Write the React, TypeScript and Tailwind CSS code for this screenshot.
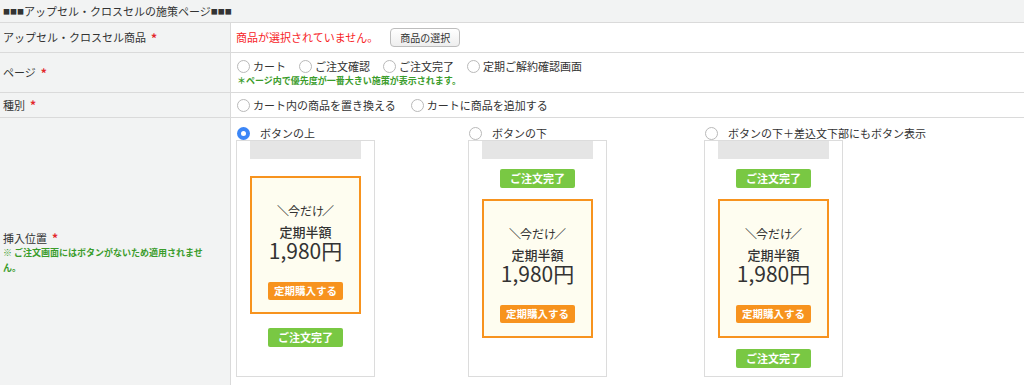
import React from "react";

const FONT = { fontFamily: '"Noto Sans CJK JP", "Noto Sans", sans-serif' };

function Radio({ checked = false }: { checked?: boolean }) {
  if (checked) {
    return (
      <span className="flex h-[13px] w-[13px] shrink-0 items-center justify-center rounded-full bg-[#3b86f7]">
        <span className="h-[5px] w-[5px] rounded-full bg-white" />
      </span>
    );
  }
  return <span className="block h-[13px] w-[13px] shrink-0 rounded-full border border-[#b9b9b9] bg-white" />;
}

function Req() {
  return <span className="ml-[5px] text-[12px] font-bold text-[#e3262b]">*</span>;
}

function GreenBtn() {
  return (
    <div className="flex h-[19px] w-[75px] items-center justify-center rounded-[2px] bg-[#79c843] text-[11px] font-bold leading-none text-white">
      ご注文完了
    </div>
  );
}

function Offer({ h }: { h: string }) {
  return (
    <div className={`flex w-[111px] flex-col items-center border-2 border-[#f7931e] bg-[#fefdf0] pt-[25px] text-[#333] ${h}`}>
      <div className="flex h-[16px] items-center text-[12px] leading-[16px]">
        <span className="tracking-[-3px]">＼</span>
        <span className="ml-[2px]">今だけ</span>
        <span className="ml-[-2px]">／</span>
      </div>
      <div className="mt-[4px] text-[13px] font-medium leading-[17px]">定期半額</div>
      <div className="text-[21px] leading-[21px]">1,980円</div>
      <div className="mt-[21px] flex h-[18px] w-[75px] items-center justify-center rounded-[2px] bg-[#f7931e] text-[10.5px] font-bold leading-none text-white">
        定期購入する
      </div>
    </div>
  );
}

function Card({ children }: { children: React.ReactNode }) {
  return (
    <div className="flex h-[237px] w-[139px] flex-col items-center border border-[#dcdcdc] bg-white">
      <div className="h-[18px] w-[111px] bg-[#e5e5e5]" />
      {children}
    </div>
  );
}

export default function App() {
  return (
    <div className="w-[1024px] bg-white text-[#333]" style={FONT}>
      <div className="flex h-[23px] items-center border-b border-[#dadada] bg-[#f2f3f3] pl-[3px] text-[11px]">
        <span className="text-[7px]">■■■</span>
        <span>アップセル・クロスセルの施策ページ</span>
        <span className="text-[7px]">■■■</span>
      </div>

      {/* row 1 */}
      <div className="flex h-[30px] border-b border-[#dadada]">
        <div className="flex w-[231px] shrink-0 items-center border-r border-[#dadada] bg-[#f2f3f3] pl-[3px] text-[11px]">
          アップセル・クロスセル商品<Req />
        </div>
        <div className="flex flex-1 items-center pl-[5px]">
          <span className="text-[11px] text-[#f7231f]">商品が選択されていません。</span>
          <button className="ml-[12px] flex h-[19px] w-[70px] items-center justify-center rounded-[4px] border border-[#bdbdbd] bg-gradient-to-b from-white to-[#eeeeee] text-[10px] text-[#333]">
            商品の選択
          </button>
        </div>
      </div>

      {/* row 2 */}
      <div className="flex h-[40px] border-b border-[#dadada]">
        <div className="flex w-[231px] shrink-0 items-center border-r border-[#dadada] bg-[#f2f3f3] pl-[3px] text-[11px]">
          ページ<Req />
        </div>
        <div className="flex flex-1 flex-col justify-center pl-[6px]">
          <div className="flex h-[16px] items-center gap-[13px] text-[11px]">
            {["カート", "ご注文確認", "ご注文完了", "定期ご解約確認画面"].map((t) => (
              <label key={t} className="flex items-center gap-[3px]">
                <Radio />
                <span>{t}</span>
              </label>
            ))}
          </div>
          <div className="h-[12px] text-[9px] font-bold leading-[12px] text-[#3a9c2b]">
            ＊ページ内で優先度が一番大きい施策が表示されます。
          </div>
        </div>
      </div>

      {/* row 3 */}
      <div className="flex h-[25px] border-b border-[#dadada]">
        <div className="flex w-[231px] shrink-0 items-center border-r border-[#dadada] bg-[#f2f3f3] pl-[3px] text-[11px]">
          種別<Req />
        </div>
        <div className="flex flex-1 items-center gap-[15px] pl-[6px] text-[11px]">
          {["カート内の商品を置き換える", "カートに商品を追加する"].map((t) => (
            <label key={t} className="flex items-center gap-[3px]">
              <Radio />
              <span>{t}</span>
            </label>
          ))}
        </div>
      </div>

      {/* row 4 */}
      <div className="flex h-[270px]">
        <div className="flex w-[231px] shrink-0 flex-col justify-center border-r border-[#dadada] bg-[#f2f3f3] pl-[3px]">
          <div className="text-[11px] leading-[14px]">
            挿入位置<Req />
          </div>
          <div className="w-[212px] text-[9px] font-bold leading-[15px] text-[#3a9c2b]">
            ※ ご注文画面にはボタンがないため適用されませ<br />ん。
          </div>
        </div>
        <div className="flex flex-1 pl-[5px] pt-[8px] text-[11px]">
          <div className="flex w-[232px] flex-col">
            <div className="flex h-[14px] items-center gap-[10px] pl-[1px]">
              <Radio checked />
              <span>ボタンの上</span>
            </div>
            <Card>
              <div className="mt-[17px]">
                <Offer h="h-[138px]" />
              </div>
              <div className="mt-[14px]">
                <GreenBtn />
              </div>
            </Card>
          </div>
          <div className="flex w-[236px] flex-col">
            <div className="flex h-[14px] items-center gap-[10px] pl-[1px]">
              <Radio />
              <span>ボタンの下</span>
            </div>
            <Card>
              <div className="mt-[10px]">
                <GreenBtn />
              </div>
              <div className="mt-[11px]">
                <Offer h="h-[139px]" />
              </div>
            </Card>
          </div>
          <div className="flex flex-col">
            <div className="flex h-[14px] items-center gap-[10px] pl-[1px]">
              <Radio />
              <span>ボタンの下＋差込文下部にもボタン表示</span>
            </div>
            <Card>
              <div className="mt-[10px]">
                <GreenBtn />
              </div>
              <div className="mt-[11px]">
                <Offer h="h-[139px]" />
              </div>
              <div className="mt-[11px]">
                <GreenBtn />
              </div>
            </Card>
          </div>
        </div>
      </div>
    </div>
  );
}
